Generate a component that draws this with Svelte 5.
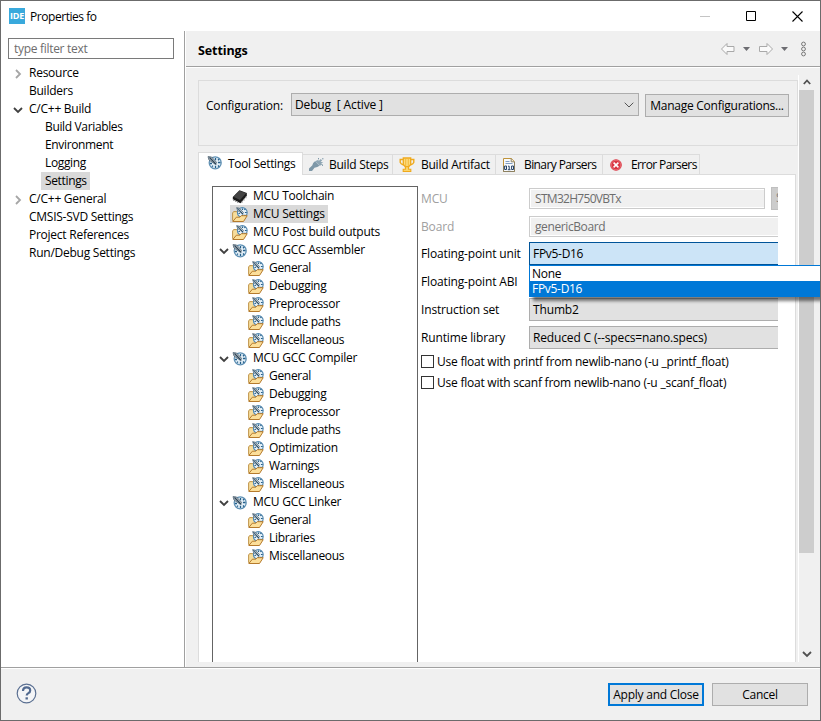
<script>
  let filter = $state('');

  const pages = [
    { label: 'Resource', arrow: 'closed' },
    { label: 'Builders' },
    { label: 'C/C++ Build', arrow: 'open' },
    { label: 'Build Variables', nested: true },
    { label: 'Environment', nested: true },
    { label: 'Logging', nested: true },
    { label: 'Settings', nested: true, selected: true },
    { label: 'C/C++ General', arrow: 'closed' },
    { label: 'CMSIS-SVD Settings' },
    { label: 'Project References' },
    { label: 'Run/Debug Settings' }
  ];

  const tabs = [
    { label: 'Tool Settings', icon: 'dial', width: 105 },
    { label: 'Build Steps', icon: 'steps', width: 90 },
    { label: 'Build Artifact', icon: 'cup', width: 103 },
    { label: 'Binary Parsers', icon: 'binary', width: 107, tight: true },
    { label: 'Error Parsers', icon: 'error', width: 97, tight: true }
  ];

  const tools = [
    { label: 'MCU Toolchain', icon: 'chip' },
    { label: 'MCU Settings', icon: 'folder', selected: true },
    { label: 'MCU Post build outputs', icon: 'folder' },
    { label: 'MCU GCC Assembler', icon: 'dial', open: true },
    { label: 'General', icon: 'folder', child: true },
    { label: 'Debugging', icon: 'folder', child: true },
    { label: 'Preprocessor', icon: 'folder', child: true },
    { label: 'Include paths', icon: 'folder', child: true },
    { label: 'Miscellaneous', icon: 'folder', child: true },
    { label: 'MCU GCC Compiler', icon: 'dial', open: true },
    { label: 'General', icon: 'folder', child: true },
    { label: 'Debugging', icon: 'folder', child: true },
    { label: 'Preprocessor', icon: 'folder', child: true },
    { label: 'Include paths', icon: 'folder', child: true },
    { label: 'Optimization', icon: 'folder', child: true },
    { label: 'Warnings', icon: 'folder', child: true },
    { label: 'Miscellaneous', icon: 'folder', child: true },
    { label: 'MCU GCC Linker', icon: 'dial', open: true },
    { label: 'General', icon: 'folder', child: true },
    { label: 'Libraries', icon: 'folder', child: true },
    { label: 'Miscellaneous', icon: 'folder', child: true }
  ];
</script>

{#snippet dial()}
  <circle cx="8.2" cy="7.8" r="6" fill="#e4f0f8" stroke="#5f90b4" stroke-width="1.3" />
  <path d="M8.5 3v2.2M8.5 10.8V13M3 8.5h2M11 7.5h2.5M11 5.2l1.2-1.2M5 11.6l1-1M11 10.5l1.2 1.2" stroke="#245f8a" stroke-width="1.3" />
  <path d="M1 1.6l3.6.4 5 5.4-1.4 1.8L2 5z" fill="#b6bec4" stroke="#4a6070" stroke-width=".8" />
  <path d="M2.5 2.5l6.8 7" stroke="#2c4558" stroke-width="1.1" />
{/snippet}

{#snippet icon(name)}
  <svg class="icon" width="16" height="16" viewBox="0 0 16 16" fill="none">
    {#if name === 'dial'}
      {@render dial()}
    {:else if name === 'folder'}
      <path d="M.6 13.5V6l1-1.4h3.2L6 6h5v7.5z" fill="#f7dd9c" stroke="#b98a3c" stroke-width=".9" />
      <circle cx="10.3" cy="5.5" r="4.9" fill="#e6f1f8" stroke="#5288b0" stroke-width="1.1" />
      <path d="M10.5 1.5v1.6M13 5.5h1.7M12.4 2.9l1-1M12.5 8l1 1M10.5 7.5v1.6M6.5 6.5h1.4" stroke="#245f8a" stroke-width="1.2" />
      <path d="M4.6.6l2.8.6 4.2 4.5-1.2 1.3-4.8-3.5z" fill="#c0c8cd" stroke="#4a6070" stroke-width=".7" />
      <path d="M5.5 1.2l5.6 6" stroke="#28506e" />
      <path d="M.8 14.5l3.6-4.3h3.4l1.4-1.5h6l-3.7 5.8z" fill="#fcdf9a" stroke="#b57a2c" />
    {:else if name === 'chip'}
      <path d="M.8 8L7.5 1.2l7.3 2.9v2.6L8.5 14.3.8 10.6z" fill="#1b1b1b" />
      <path d="M1.5 7.8l6-6 6.6 2.5L8 11z" fill="#444" />
      <path d="M1.5 10v2M3.5 11v2M5.5 12v2M10 12v2M12 9.8v2M14 7.3v2" stroke="#8d8d8d" stroke-width=".8" />
    {:else if name === 'steps'}
      <path d="M1 14v-2.5l3.2-3 1-2.5 1.8-1.8 4.5 4.6-2.2 1.3-2.8.6L4 14z" fill="#7e98a8" />
      <path d="M7 4.2l3-1.2 1 .7 1.8-1.7 1.4 1.5-1.6 1.3 2.7.7-2 .8 1 1.5-1.5.2-.8 1.1z" fill="#8fa6b4" />
      <path d="M10.5 1v1.4M14.5 7.5v1.4M14 1.8h1.5" stroke="#7e98a8" />
    {:else if name === 'cup'}
      <path d="M4.5 2.5H1.2v2.8l1 1.5 2.5 1.2M11.5 2.5h3.3v2.8l-1 1.5-2.5 1.2" stroke="#efa91c" stroke-width="1.4" />
      <path d="M4.3 1h7.4v6.5L9.8 9.6H6.2L4.3 7.5z" fill="#fcdb7c" stroke="#efa91c" stroke-width="1.3" />
      <path d="M6.7 2v7M9.3 2v7" stroke="#f3b83a" />
      <path d="M6.4 9.8h3.2v2.4h2.2v2.3H4.2v-2.3h2.2z" fill="#fcd569" stroke="#efa91c" stroke-width="1.1" />
    {:else if name === 'binary'}
      <path d="M2.5 14.5v-13h7.8l3.2 3.2v9.8z" fill="#f8fafc" stroke="#c0943a" />
      <path d="M10.2 1.5v3.3h3.3M13.5 5v9.5h-11V9" stroke="#8c8061" />
      <path d="M4.5 4.5h4M4.5 6.5h7" stroke="#819dc3" />
      <path d="M3.6 9h1.9v3.5H3.6zM10.6 9h1.9v3.5h-1.9zM7 9.2h1.2v3.3M6.8 12.7h2.7" stroke="#254267" />
    {:else if name === 'error'}
      <circle cx="8" cy="8" r="5.8" fill="#d93643" />
      <circle cx="8" cy="8" r="4.8" stroke="#e96a72" />
      <path d="M5.6 5.6l4.8 4.8M10.4 5.6l-4.8 4.8" stroke="#fff" stroke-width="1.5" />
    {/if}
  </svg>
{/snippet}

{#snippet chevron(kind, colour)}
  <svg class="chevron" width="10" height="10" viewBox="0 0 10 10" fill="none">
    <path d={kind === 'open' ? 'M1 3l4 4 4-4' : kind === 'up' ? 'M1.8 7L5 3.5 8.2 7' : 'M3 1l4 4-4 4'} stroke={colour} stroke-width="1.8" />
  </svg>
{/snippet}

<div class="window">
  <header class="titlebar">
    <span class="logo">IDE</span>
    <span class="title">Properties fo</span>
    <div class="controls">
      <svg width="11" height="11" viewBox="0 0 11 11"><path d="M0 5.5h10" stroke="#c4c4c4" /></svg>
      <svg width="11" height="11" viewBox="0 0 11 11"><path d="M.5 .5h9v9h-9z" fill="none" stroke="#000" /></svg>
      <svg width="11" height="11" viewBox="0 0 11 11"><path d="M.5 .5l10 10M10.5 .5l-10 10" stroke="#000" stroke-width="1.1" /></svg>
    </div>
  </header>

  <div class="body">
    <aside class="sidebar">
      <input class="filter" placeholder="type filter text" bind:value={filter} />
      <ul class="pages">
        {#each pages as page}
          <li class:nested={page.nested}>
            <span class="arrow">
              {#if page.arrow}
                {@render chevron(page.arrow, page.arrow === 'open' ? '#404040' : '#a6a6a6')}
              {/if}
            </span>
            <span class="label" class:selected={page.selected}>{page.label}</span>
          </li>
        {/each}
      </ul>
    </aside>

    <main>
      <div class="page-head">
        <h1>Settings</h1>
        <svg width="88" height="18" viewBox="0 0 88 18" fill="none">
          <path d="M1.5 9l5.5-5.5v3h7v5H7v3z" fill="#fafafa" stroke="#a9a9a9" />
          <path d="M23 7h7l-3.5 4z" fill="#6d6d72" />
          <path d="M52.5 9L47 3.5v3h-7.5v5H47v3z" fill="#fafafa" stroke="#a9a9a9" />
          <path d="M61 7h7l-3.5 4z" fill="#6d6d72" />
          <circle cx="83.5" cy="4" r="1.9" stroke="#777" />
          <circle cx="83.5" cy="9" r="1.9" stroke="#777" />
          <circle cx="83.5" cy="14" r="1.9" stroke="#777" />
        </svg>
      </div>

      <div class="scroller">
        <div class="content">
          <section class="config">
            <span class="config-label">Configuration:</span>
            <div class="combo config-combo">
              <span>Debug&nbsp; [ Active ]</span>
              <svg width="10" height="6" viewBox="0 0 10 6"><path d="M.7 .7L5 5 9.3 .7" fill="none" stroke="#555" /></svg>
            </div>
            <button class="manage">Manage Configurations...</button>
          </section>

          <nav class="tabs">
            {#each tabs as tab, i}
              <div class="tab" class:active={i === 0} class:tight={tab.tight} style="width: {tab.width}px">
                {@render icon(tab.icon)}
                <span>{tab.label}</span>
              </div>
            {/each}
          </nav>

          <section class="panel">
            <ul class="tools">
              {#each tools as tool}
                <li class:child={tool.child}>
                  <span class="arrow">
                    {#if tool.open}{@render chevron('open', '#404040')}{/if}
                  </span>
                  <span class="tool" class:selected={tool.selected}>
                    {@render icon(tool.icon)}
                    <span class="tool-label">{tool.label}</span>
                  </span>
                </li>
              {/each}
            </ul>

            <div class="form">
              <div class="row disabled">
                <span class="name">MCU</span>
                <div class="text-field short">STM32H750VBTx</div>
                <div class="select-button">S</div>
              </div>
              <div class="row disabled">
                <span class="name">Board</span>
                <div class="text-field">genericBoard</div>
              </div>
              <div class="row">
                <span class="name">Floating-point unit</span>
                <div class="combo focused">FPv5-D16
                  <div class="popup">
                    <div class="option">None</div>
                    <div class="option current">FPv5-D16</div>
                  </div>
                </div>
              </div>
              <div class="row">
                <span class="name">Floating-point ABI</span>
                <div class="combo"></div>
              </div>
              <div class="row">
                <span class="name">Instruction set</span>
                <div class="combo">Thumb2</div>
              </div>
              <div class="row">
                <span class="name">Runtime library</span>
                <div class="combo">Reduced C (--specs=nano.specs)</div>
              </div>
              <div class="checks">
                <div class="check"><span class="box"></span>Use float with printf from newlib-nano (-u _printf_float)</div>
                <div class="check"><span class="box"></span>Use float with scanf from newlib-nano (-u _scanf_float)</div>
              </div>
            </div>
          </section>
        </div>

        <div class="scrollbar">
          {@render chevron('up', '#505050')}
          <div class="thumb"></div>
          {@render chevron('open', '#505050')}
        </div>
      </div>
    </main>
  </div>

  <footer>
    <svg class="help" width="21" height="21" viewBox="0 0 21 21">
      <circle cx="10.5" cy="10.5" r="9.3" fill="#f4f5f7" stroke="#5b7092" stroke-width="1.2" />
      <path d="M7 8q0-3.7 3.6-3.7T14.2 7.5q0 1.6-1.8 2.6-1.7.9-1.7 2.5" fill="none" stroke="#526a90" stroke-width="2.2" />
      <path d="M9.5 14.3h2.4v2.2H9.5z" fill="#526a90" />
    </svg>
    <button class="apply">Apply and Close</button>
    <button class="cancel">Cancel</button>
  </footer>
</div>

<style>
  :global(body) {
    margin: 0;
  }

  .window {
    width: 821px;
    height: 721px;
    box-sizing: border-box;
    display: flex;
    flex-direction: column;
    border: 1px solid #6b6b6b;
    background: #f0f0f0;
    overflow: hidden;
    font-family: "Open Sans", "Noto Sans", sans-serif;
    font-size: 12px;
    letter-spacing: -0.25px;
    color: #000;
  }

  .window :global(*) {
    box-sizing: border-box;
  }

  .window svg {
    display: block;
    flex: none;
  }

  ul {
    list-style: none;
    margin: 0;
    padding: 0;
  }

  button {
    font: inherit;
    letter-spacing: inherit;
    color: inherit;
    padding: 0;
    height: 23px;
    background: #e1e1e1;
    border: 1px solid #adadad;
    white-space: nowrap;
  }

  .titlebar {
    flex: none;
    height: 30px;
    display: flex;
    align-items: center;
    padding: 0 17px 0 8px;
    background: #fff;
  }

  .logo {
    width: 16px;
    height: 16px;
    background: #39a9dc;
    color: #fff;
    font: bold 9px/16px "Open Sans", sans-serif;
    text-align: center;
    letter-spacing: -0.3px;
  }

  .title {
    margin-left: 5px;
    letter-spacing: -0.45px;
  }

  .controls {
    margin-left: auto;
    display: flex;
    gap: 35px;
  }

  .body {
    flex: none;
    height: 636px;
    display: flex;
  }

  .sidebar {
    flex: none;
    width: 184px;
    padding: 7px 0 0 7px;
    background: #fff;
    border-right: 1px solid #a0a0a0;
  }

  .filter {
    display: block;
    width: 166px;
    height: 21px;
    padding: 0 5px;
    border: 1px solid #7a7a7a;
    border-radius: 0;
    font: inherit;
    letter-spacing: -0.3px;
  }

  .filter::placeholder {
    color: #6d6d6d;
  }

  .pages {
    padding-top: 5px;
    letter-spacing: -0.25px;
  }

  li {
    height: 18px;
    display: flex;
    align-items: center;
    line-height: 18px;
    white-space: nowrap;
  }

  .arrow {
    width: 10px;
    flex: none;
    padding-top: 2px;
  }

  .pages .arrow {
    margin: 0 3px 0 5px;
  }

  .pages .nested .arrow {
    margin-right: 19px;
  }

  .nested {
    letter-spacing: -0.35px;
  }

  .label {
    padding: 0 3px 0 4px;
    margin-left: -1px;
  }

  .selected {
    background: #d9d9d9;
  }

  main {
    flex: 1;
    min-width: 0;
    border-left: 1px solid #fff;
  }

  .page-head {
    height: 36px;
    display: flex;
    align-items: center;
    justify-content: space-between;
    padding: 0 12px 0 12px;
    border-bottom: 1px solid #a0a0a0;
    box-shadow: 0 1px #fff;
  }

  h1 {
    margin: 4px 0 0;
    font-size: 12.5px;
    line-height: 18px;
    letter-spacing: -0.1px;
  }

  .scroller {
    height: 592px;
    margin-top: 8px;
    display: flex;
    padding-left: 12px;
  }

  .content {
    width: 600px;
    height: 587px;
    flex: none;
    padding-top: 5px;
  }

  .config {
    width: 600px;
    height: 66px;
    display: flex;
    padding: 12px 7px 0;
    border: 1px solid #dcdcdc;
  }

  .config-label {
    width: 85px;
    line-height: 26px;
    letter-spacing: -0.2px;
  }

  .combo {
    height: 23px;
    background: #e1e1e1;
    border: 1px solid #adadad;
    padding: 0 4px 0 3px;
    line-height: 21px;
    letter-spacing: -0.15px;
    white-space: nowrap;
  }

  .config-combo {
    width: 348px;
    display: flex;
    align-items: center;
    justify-content: space-between;
  }

  .manage {
    width: 144px;
    margin: 1px 0 0 6px;
  }

  .tabs {
    height: 22px;
    margin-top: 6px;
    display: flex;
    align-items: flex-end;
  }

  .tab {
    height: 20px;
    display: flex;
    align-items: center;
    gap: 5px;
    padding-left: 5px;
    border: 1px solid #dcdcdc;
    border-width: 1px 1px 0 0;
    white-space: nowrap;
  }

  .tab:nth-child(n + 3) {
    padding-left: 6px;
    gap: 6px;
  }

  .tab.tight {
    padding-left: 5px;
    gap: 7px;
    letter-spacing: -0.6px;
  }

  .tab.active {
    height: 23px;
    margin-bottom: -1px;
    padding: 0 0 2px 8px;
    background: #fff;
    border-left-width: 1px;
    position: relative;
    letter-spacing: -0.33px;
  }

  .panel {
    width: 598px;
    height: 488px;
    display: flex;
    border: 1px solid #dcdcdc;
    border-bottom: 0;
    background: #fff;
    padding: 11px 0 0 13px;
  }

  .tools {
    flex: none;
    width: 206px;
    border: 1px solid #646464;
    border-bottom: 0;
    padding-left: 6px;
  }

  .tool {
    display: flex;
    align-items: center;
    height: 18px;
    margin-left: 1px;
    padding: 0 3px 0 2px;
  }

  .child .tool {
    margin-left: 17px;
    letter-spacing: -0.3px;
  }

  .tool .icon {
    margin-top: 1px;
  }

  .tool-label {
    margin-left: 5px;
  }

  .form {
    width: 360px;
    padding-left: 3px;
  }

  .row {
    width: 357px;
    height: 28px;
    display: flex;
    align-items: flex-start;
  }

  .name {
    flex: none;
    width: 108px;
    line-height: 24px;
    letter-spacing: -0.15px;
    white-space: nowrap;
  }

  .disabled .name {
    color: #a0a0a0;
    line-height: 26px;
  }

  .row .combo {
    flex: 1;
    border-right: 0;
  }

  .text-field {
    flex: 1;
    height: 21px;
    margin-top: 2px;
    padding-left: 5px;
    border: 1px solid #ccc;
    border-right: 0;
    box-shadow: inset 1px 1px #fff, inset 0 -1px #fff;
    background: #f0f0f0;
    color: #6d6d6d;
    line-height: 20px;
    letter-spacing: -0.4px;
  }

  .text-field.short {
    flex: none;
    width: 236px;
    border-right: 1px solid #ccc;
    letter-spacing: -0.7px;
  }

  .select-button {
    width: 7px;
    height: 23px;
    margin: 1px 0 0 6px;
    padding-left: 4px;
    overflow: hidden;
    background: #ccc;
    border: 1px solid #bfbfbf;
    border-right: 0;
    color: #838383;
    line-height: 20px;
  }

  .row .focused {
    position: relative;
    background: #cce4f7;
    border-color: #005499;
    letter-spacing: -0.3px;
  }

  .popup {
    position: absolute;
    left: 0;
    top: 22px;
    width: 300px;
    margin-left: -1px;
    border: 1px solid #0078d7;
    border-bottom: 0;
    background: #fff;
    box-shadow: 4px 4px 3px rgba(0, 0, 0, 0.5);
    z-index: 1;
  }

  .option {
    height: 15px;
    padding-left: 2px;
    line-height: 15px;
  }

  .option.current {
    height: 16px;
    background: #0078d7;
    color: #fff;
  }

  .checks {
    margin-top: -4px;
  }

  .check {
    height: 21px;
    display: flex;
    align-items: center;
    gap: 3px;
    padding-top: 2px;
    letter-spacing: -0.23px;
    white-space: nowrap;
  }

  .box {
    width: 13px;
    height: 13px;
    border: 1px solid #333;
    background: #fff;
  }

  .scrollbar {
    width: 16px;
    height: 587px;
    display: flex;
    flex-direction: column;
    align-items: center;
    border-left: 1px solid #fff;
    padding: 2px 0 3px;
  }

  .thumb {
    width: 15px;
    height: 463px;
    margin: 3px 0 auto;
    background: #cdcdcd;
  }

  footer {
    flex: 1;
    display: flex;
    align-items: flex-start;
    padding: 15px 12px 0 15px;
    border-top: 1px solid #a0a0a0;
    box-shadow: inset 0 1px #fff;
  }

  .apply {
    width: 96px;
    margin-left: auto;
    border: 2px solid #0078d7;
  }

  .cancel {
    width: 96px;
    margin-left: 8px;
  }
</style>
